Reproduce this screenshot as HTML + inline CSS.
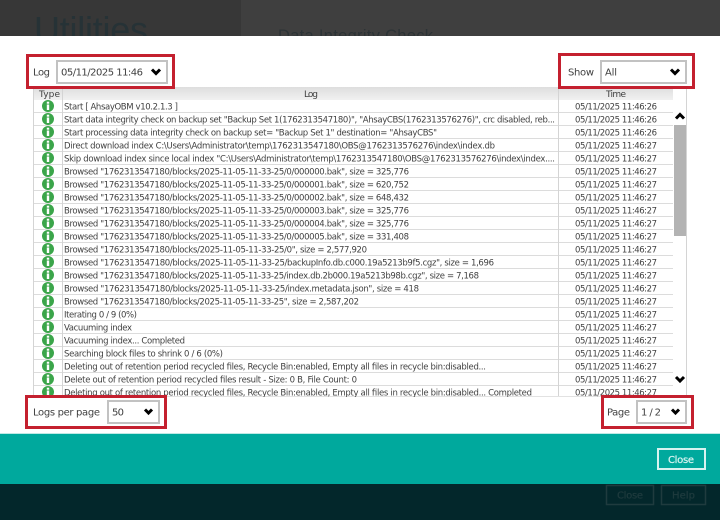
<!DOCTYPE html>
<html><head><meta charset="utf-8"><style>
html,body{margin:0;padding:0;width:720px;height:520px;overflow:hidden;background:#3d3d3d}
svg{display:block;filter:blur(.3px)}
text{font-family:"DejaVu Sans","Liberation Sans",sans-serif;font-size:8.500px;fill:#404040}
.l{font-size:10px;fill:#404040}
.i{fill:#fff}
.g{fill:#3ba54a}
.c{fill:none;stroke:#000;stroke-width:3}
.s{fill:#fff;stroke:#c2c2c2;stroke-width:2}
.r{fill:#fff;stroke:#c4202f;stroke-width:3}
</style></head><body>
<svg width="720" height="520" viewBox="0 0 720 520" xmlns="http://www.w3.org/2000/svg">
<defs><linearGradient id="h" x1="0" y1="0" x2="0" y2="1"><stop offset="0" stop-color="#dedede"/><stop offset="1" stop-color="#f1f1f1"/></linearGradient></defs>
<rect width="720" height="36" fill="#3f3f3f"/>
<rect width="241" height="36" fill="#373737"/>
<text x="34" y="42" style="font-family:'Liberation Sans',sans-serif;font-size:36px;fill:#263236" textLength="114">Utilities</text>
<text x="278" y="41" style="font-family:'Liberation Sans',sans-serif;font-size:16.500px;fill:#2c3336" textLength="155">Data Integrity Check</text>
<rect y="36" width="720" height="398" fill="#fff"/>

<!-- table -->
<rect x="33" y="87" width="640" height="13" fill="url(#h)"/>
<g fill="#dcdcdc">
<rect x="33" y="112" width="640" height="1"/><rect x="33" y="125" width="640" height="1"/><rect x="33" y="138" width="640" height="1"/><rect x="33" y="151" width="640" height="1"/><rect x="33" y="164" width="640" height="1"/><rect x="33" y="177" width="640" height="1"/><rect x="33" y="190" width="640" height="1"/><rect x="33" y="203" width="640" height="1"/><rect x="33" y="216" width="640" height="1"/><rect x="33" y="229" width="640" height="1"/><rect x="33" y="242" width="640" height="1"/><rect x="33" y="255" width="640" height="1"/><rect x="33" y="268" width="640" height="1"/><rect x="33" y="281" width="640" height="1"/><rect x="33" y="294" width="640" height="1"/><rect x="33" y="307" width="640" height="1"/><rect x="33" y="320" width="640" height="1"/><rect x="33" y="333" width="640" height="1"/><rect x="33" y="346" width="640" height="1"/><rect x="33" y="359" width="640" height="1"/><rect x="33" y="372" width="640" height="1"/><rect x="33" y="385" width="640" height="1"/>
</g>
<g fill="#d4d4d4">
<rect x="33" y="87" width="1" height="309"/><rect x="62" y="87" width="1" height="309"/><rect x="558" y="87" width="1" height="309"/><rect x="686" y="87" width="1" height="309"/>
</g>
<rect x="33" y="396" width="654" height="1" fill="#e2e2e2"/>
<text x="39" y="97" textLength="21" style="font-size:9px">Type</text>
<text x="304" y="97" textLength="14" style="font-size:9px">Log</text>
<text x="606" y="97" textLength="20" style="font-size:9px">Time</text>

<!-- scrollbar -->
<rect x="674" y="125" width="12" height="111" fill="#b3b3b3"/>
<path class="c" d="M676 118.500L680 114.500L684 118.500"/>
<path class="c" d="M676 377L680 381L684 377"/>

<!-- icons -->
<g id="icons">
<g transform="translate(48,106)"><circle class="g" r="6"/><rect class="i" x="-1.200" y="-1.500" width="2.400" height="5.500"/><rect class="i" x="-1.200" y="-4.300" width="2.400" height="2"/></g>
<g transform="translate(48,119)"><circle class="g" r="6"/><rect class="i" x="-1.200" y="-1.500" width="2.400" height="5.500"/><rect class="i" x="-1.200" y="-4.300" width="2.400" height="2"/></g>
<g transform="translate(48,132)"><circle class="g" r="6"/><rect class="i" x="-1.200" y="-1.500" width="2.400" height="5.500"/><rect class="i" x="-1.200" y="-4.300" width="2.400" height="2"/></g>
<g transform="translate(48,145)"><circle class="g" r="6"/><rect class="i" x="-1.200" y="-1.500" width="2.400" height="5.500"/><rect class="i" x="-1.200" y="-4.300" width="2.400" height="2"/></g>
<g transform="translate(48,158)"><circle class="g" r="6"/><rect class="i" x="-1.200" y="-1.500" width="2.400" height="5.500"/><rect class="i" x="-1.200" y="-4.300" width="2.400" height="2"/></g>
<g transform="translate(48,171)"><circle class="g" r="6"/><rect class="i" x="-1.200" y="-1.500" width="2.400" height="5.500"/><rect class="i" x="-1.200" y="-4.300" width="2.400" height="2"/></g>
<g transform="translate(48,184)"><circle class="g" r="6"/><rect class="i" x="-1.200" y="-1.500" width="2.400" height="5.500"/><rect class="i" x="-1.200" y="-4.300" width="2.400" height="2"/></g>
<g transform="translate(48,197)"><circle class="g" r="6"/><rect class="i" x="-1.200" y="-1.500" width="2.400" height="5.500"/><rect class="i" x="-1.200" y="-4.300" width="2.400" height="2"/></g>
<g transform="translate(48,210)"><circle class="g" r="6"/><rect class="i" x="-1.200" y="-1.500" width="2.400" height="5.500"/><rect class="i" x="-1.200" y="-4.300" width="2.400" height="2"/></g>
<g transform="translate(48,223)"><circle class="g" r="6"/><rect class="i" x="-1.200" y="-1.500" width="2.400" height="5.500"/><rect class="i" x="-1.200" y="-4.300" width="2.400" height="2"/></g>
<g transform="translate(48,236)"><circle class="g" r="6"/><rect class="i" x="-1.200" y="-1.500" width="2.400" height="5.500"/><rect class="i" x="-1.200" y="-4.300" width="2.400" height="2"/></g>
<g transform="translate(48,249)"><circle class="g" r="6"/><rect class="i" x="-1.200" y="-1.500" width="2.400" height="5.500"/><rect class="i" x="-1.200" y="-4.300" width="2.400" height="2"/></g>
<g transform="translate(48,262)"><circle class="g" r="6"/><rect class="i" x="-1.200" y="-1.500" width="2.400" height="5.500"/><rect class="i" x="-1.200" y="-4.300" width="2.400" height="2"/></g>
<g transform="translate(48,275)"><circle class="g" r="6"/><rect class="i" x="-1.200" y="-1.500" width="2.400" height="5.500"/><rect class="i" x="-1.200" y="-4.300" width="2.400" height="2"/></g>
<g transform="translate(48,288)"><circle class="g" r="6"/><rect class="i" x="-1.200" y="-1.500" width="2.400" height="5.500"/><rect class="i" x="-1.200" y="-4.300" width="2.400" height="2"/></g>
<g transform="translate(48,301)"><circle class="g" r="6"/><rect class="i" x="-1.200" y="-1.500" width="2.400" height="5.500"/><rect class="i" x="-1.200" y="-4.300" width="2.400" height="2"/></g>
<g transform="translate(48,314)"><circle class="g" r="6"/><rect class="i" x="-1.200" y="-1.500" width="2.400" height="5.500"/><rect class="i" x="-1.200" y="-4.300" width="2.400" height="2"/></g>
<g transform="translate(48,327)"><circle class="g" r="6"/><rect class="i" x="-1.200" y="-1.500" width="2.400" height="5.500"/><rect class="i" x="-1.200" y="-4.300" width="2.400" height="2"/></g>
<g transform="translate(48,340)"><circle class="g" r="6"/><rect class="i" x="-1.200" y="-1.500" width="2.400" height="5.500"/><rect class="i" x="-1.200" y="-4.300" width="2.400" height="2"/></g>
<g transform="translate(48,353)"><circle class="g" r="6"/><rect class="i" x="-1.200" y="-1.500" width="2.400" height="5.500"/><rect class="i" x="-1.200" y="-4.300" width="2.400" height="2"/></g>
<g transform="translate(48,366)"><circle class="g" r="6"/><rect class="i" x="-1.200" y="-1.500" width="2.400" height="5.500"/><rect class="i" x="-1.200" y="-4.300" width="2.400" height="2"/></g>
<g transform="translate(48,379)"><circle class="g" r="6"/><rect class="i" x="-1.200" y="-1.500" width="2.400" height="5.500"/><rect class="i" x="-1.200" y="-4.300" width="2.400" height="2"/></g>
<g transform="translate(48,392)"><circle class="g" r="6"/><rect class="i" x="-1.200" y="-1.500" width="2.400" height="5.500"/><rect class="i" x="-1.200" y="-4.300" width="2.400" height="2"/></g>
</g>

<!-- log text -->
<text x="64" y="109.300" textLength="114">Start [ AhsayOBM v10.2.1.3 ]</text>
<text x="64" y="122.300" textLength="491">Start data integrity check on backup set "Backup Set 1(1762313547180)", "AhsayCBS(1762313576276)", crc disabled, reb...</text>
<text x="64" y="135.300" textLength="373">Start processing data integrity check on backup set= "Backup Set 1" destination= "AhsayCBS"</text>
<text x="64" y="148.300" textLength="431">Direct download index C:\Users\Administrator\temp\1762313547180\OBS@1762313576276\index\index.db</text>
<text x="64" y="161.300" textLength="491">Skip download index since local index "C:\Users\Administrator\temp\1762313547180\OBS@1762313576276\index\index....</text>
<text x="64" y="174.300" textLength="345">Browsed "1762313547180/blocks/2025-11-05-11-33-25/0/000000.bak", size = 325,776</text>
<text x="64" y="187.300" textLength="345">Browsed "1762313547180/blocks/2025-11-05-11-33-25/0/000001.bak", size = 620,752</text>
<text x="64" y="200.300" textLength="345">Browsed "1762313547180/blocks/2025-11-05-11-33-25/0/000002.bak", size = 648,432</text>
<text x="64" y="213.300" textLength="345">Browsed "1762313547180/blocks/2025-11-05-11-33-25/0/000003.bak", size = 325,776</text>
<text x="64" y="226.300" textLength="345">Browsed "1762313547180/blocks/2025-11-05-11-33-25/0/000004.bak", size = 325,776</text>
<text x="64" y="239.300" textLength="345">Browsed "1762313547180/blocks/2025-11-05-11-33-25/0/000005.bak", size = 331,408</text>
<text x="64" y="252.300" textLength="303">Browsed "1762313547180/blocks/2025-11-05-11-33-25/0", size = 2,577,920</text>
<text x="64" y="265.300" textLength="430">Browsed "1762313547180/blocks/2025-11-05-11-33-25/backupInfo.db.c000.19a5213b9f5.cgz", size = 1,696</text>
<text x="64" y="278.300" textLength="415">Browsed "1762313547180/blocks/2025-11-05-11-33-25/index.db.2b000.19a5213b98b.cgz", size = 7,168</text>
<text x="64" y="291.300" textLength="355">Browsed "1762313547180/blocks/2025-11-05-11-33-25/index.metadata.json", size = 418</text>
<text x="64" y="304.300" textLength="295">Browsed "1762313547180/blocks/2025-11-05-11-33-25", size = 2,587,202</text>
<text x="64" y="317.300" textLength="73">Iterating 0 / 9 (0%)</text>
<text x="64" y="330.300" textLength="68">Vacuuming index</text>
<text x="64" y="343.300" textLength="121">Vacuuming index... Completed</text>
<text x="64" y="356.300" textLength="159">Searching block files to shrink 0 / 6 (0%)</text>
<text x="64" y="369.300" textLength="422">Deleting out of retention period recycled files, Recycle Bin:enabled, Empty all files in recycle bin:disabled...</text>
<text x="64" y="382.300" textLength="293">Delete out of retention period recycled files result - Size: 0 B, File Count: 0</text>
<text x="64" y="395.300" textLength="468">Deleting out of retention period recycled files, Recycle Bin:enabled, Empty all files in recycle bin:disabled... Completed</text>

<!-- time text -->
<text x="575" y="109.300" textLength="82">05/11/2025 11:46:26</text>
<text x="575" y="122.300" textLength="82">05/11/2025 11:46:26</text>
<text x="575" y="135.300" textLength="82">05/11/2025 11:46:26</text>
<text x="575" y="148.300" textLength="82">05/11/2025 11:46:27</text>
<text x="575" y="161.300" textLength="82">05/11/2025 11:46:27</text>
<text x="575" y="174.300" textLength="82">05/11/2025 11:46:27</text>
<text x="575" y="187.300" textLength="82">05/11/2025 11:46:27</text>
<text x="575" y="200.300" textLength="82">05/11/2025 11:46:27</text>
<text x="575" y="213.300" textLength="82">05/11/2025 11:46:27</text>
<text x="575" y="226.300" textLength="82">05/11/2025 11:46:27</text>
<text x="575" y="239.300" textLength="82">05/11/2025 11:46:27</text>
<text x="575" y="252.300" textLength="82">05/11/2025 11:46:27</text>
<text x="575" y="265.300" textLength="82">05/11/2025 11:46:27</text>
<text x="575" y="278.300" textLength="82">05/11/2025 11:46:27</text>
<text x="575" y="291.300" textLength="82">05/11/2025 11:46:27</text>
<text x="575" y="304.300" textLength="82">05/11/2025 11:46:27</text>
<text x="575" y="317.300" textLength="82">05/11/2025 11:46:27</text>
<text x="575" y="330.300" textLength="82">05/11/2025 11:46:27</text>
<text x="575" y="343.300" textLength="82">05/11/2025 11:46:27</text>
<text x="575" y="356.300" textLength="82">05/11/2025 11:46:27</text>
<text x="575" y="369.300" textLength="82">05/11/2025 11:46:27</text>
<text x="575" y="382.300" textLength="82">05/11/2025 11:46:27</text>
<text x="575" y="395.300" textLength="82">05/11/2025 11:46:27</text>

<!-- white strip clipping bottom of the table -->
<rect y="397" width="720" height="37" fill="#fff"/>

<!-- top controls -->
<rect class="r" x="27.500" y="55.500" width="146" height="32"/>
<text class="l" x="33" y="75.500" textLength="17">Log</text>
<rect class="s" x="57" y="61" width="110" height="22"/>
<text class="l" x="61" y="75.500" textLength="82">05/11/2025 11:46</text>
<path class="c" d="M152 69.500L156 73.500L160 69.500"/>

<rect class="r" x="559.500" y="54.500" width="134" height="33"/>
<text class="l" x="568" y="75.500" textLength="26">Show</text>
<rect class="s" x="601" y="61" width="85" height="22"/>
<text class="l" x="605" y="75.500" textLength="12">All</text>
<path class="c" d="M671 69.500L675 73.500L679 69.500"/>

<!-- bottom controls -->
<rect class="r" x="26.500" y="396.500" width="139" height="31"/>
<text class="l" x="33" y="415.500" textLength="67">Logs per page</text>
<rect class="s" x="108" y="401" width="51" height="22"/>
<text class="l" x="112" y="415.500" textLength="12">50</text>
<path class="c" d="M145 409.500L148.500 413L152 409.500"/>

<rect class="r" x="602.500" y="396.500" width="90" height="31"/>
<text class="l" x="607" y="415.500" textLength="23">Page</text>
<rect class="s" x="637" y="401" width="49" height="22"/>
<text class="l" x="641" y="415.500" textLength="20">1 / 2</text>
<path class="c" d="M672 409.500L675.500 413L679 409.500"/>

<!-- footer -->
<rect y="433" width="720" height="1" fill="#bfe9e5"/>
<rect y="434" width="720" height="50" fill="#00a99d"/>
<rect y="484" width="720" height="36" fill="#03272b"/>
<rect x="658" y="449" width="47" height="20" fill="none" stroke="#d6f3f0" stroke-width="2"/>
<text x="668" y="463" textLength="26" style="font-size:10px;fill:#d6f3f0;stroke:#d6f3f0;stroke-width:.25">Close</text>
<rect x="606.500" y="485.500" width="47" height="19" fill="none" stroke="#1f3b3e" stroke-width="1.500"/>
<text x="617" y="498.500" textLength="26" style="font-size:10px;fill:#1f3b3e;stroke:#1f3b3e;stroke-width:.25">Close</text>
<rect x="661.500" y="485.500" width="44" height="19" fill="none" stroke="#1f3b3e" stroke-width="1.500"/>
<text x="672" y="498.500" textLength="23" style="font-size:10px;fill:#1f3b3e;stroke:#1f3b3e;stroke-width:.25">Help</text>
</svg>
</body></html>
